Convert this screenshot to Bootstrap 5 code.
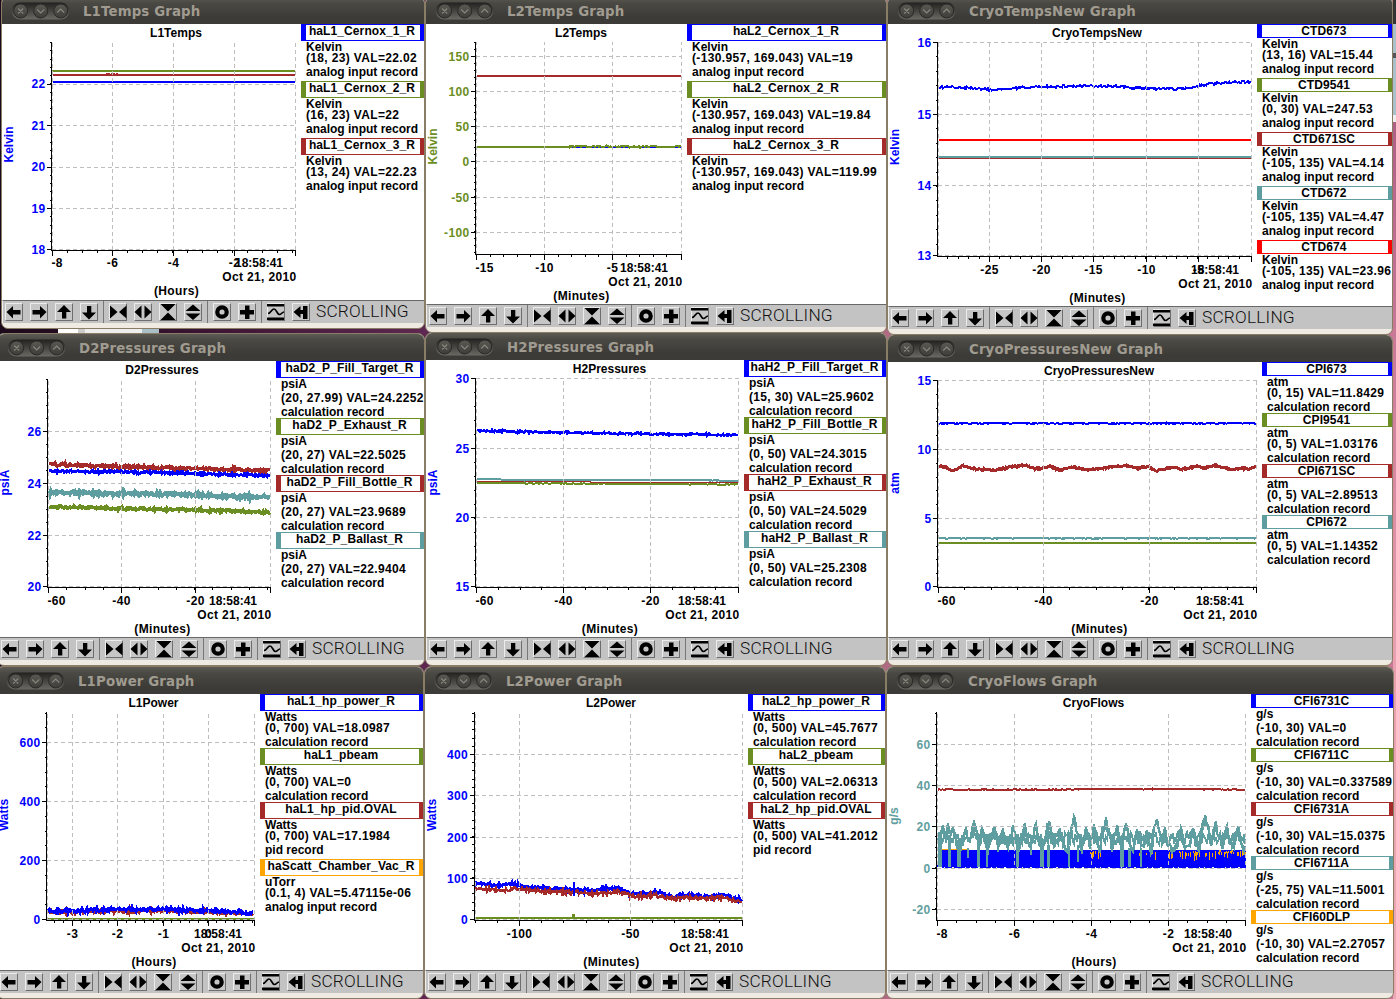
<!DOCTYPE html>
<html lang="en">
<head>
<meta charset="utf-8">
<title>StripTool Graphs</title>
<link href="https://cdn.jsdelivr.net/npm/bootstrap@5.3.0/dist/css/bootstrap.min.css" rel="stylesheet">
<style>
body{width:1396px;height:999px;margin:0;font:bold 12px/12px "Liberation Sans",Arial,sans-serif;color:#000;
 background:linear-gradient(90deg,#1c0a1c 0,#3a1434 200px,#5f2852 430px,#8a4468 700px,#b06a84 885px,#c97796 1396px)}
.win{border:1px solid #8a7d66;border-radius:7px;background:#f0ebe2;overflow:hidden}
.bar{height:27px;flex:none;background:linear-gradient(#5d5b54 0,#4a4943 6px,#3c3b37 20px,#3c3b37);
 font:bold 13.33px/27px "DejaVu Sans",sans-serif;letter-spacing:.13px;color:#a09b90}
.bar svg{margin-left:9px;margin-right:13px;flex:none}
.bar span{margin-top:1px}
.pane{background:#fff;overflow:hidden}
.plot text{font:bold 12px "Liberation Sans",Arial,sans-serif}
.n{letter-spacing:.34px}
.leg{overflow:hidden;white-space:pre}
.tag{box-sizing:border-box;border:1px solid;border-left-width:5px;border-right-width:4px;letter-spacing:.1px}
.tag span{color:#000;display:block;text-align:center;margin:0 -3px 0 -5px}
.ln{padding-left:5px;height:11px}
.ln.d{height:14px}
.tools{height:23px;flex:none;background:#c3c3c3;border-top:1px solid #686868;border-left:1px solid #eee;padding:2px 0 0 2px;margin-bottom:5px}
.tools .k{width:18px;height:18px;margin-right:7px;border:1px solid;border-color:#ececec #6e6e6e #6e6e6e #ececec;flex:none;background:#c6c6c6}
.tools .k svg{display:block;margin:-1px}
.tools i{width:1px;height:22px;background:#777;margin:-2px 5px 0 -2px;flex:none}
.tools b{font:300 17.3px/16px Roboto,"Liberation Sans",sans-serif;letter-spacing:.2px;color:#111;margin-left:-1px}
.edge{left:1393px;top:0;width:3px;height:999px;background:linear-gradient(#333 0 24px,#a9c0c9 24px 53px,#555 53px 58px,#a9c0c9 58px 115px,#eee 115px 122px,#b05f85 122px,#e9a0b0 660px,#eba8b4)}
.peek{left:58px;top:328px;width:101px;height:7px;background:linear-gradient(90deg,#fff 0 20px,#ccc 20px 27px,#eee 27px 84px,#a9c0c9 84px)}
</style>
</head>
<body class="position-relative overflow-hidden">
<svg width="0" height="0" class="position-absolute">
 <symbol id="i0" viewBox="0 0 18 18"><path d="M1.5 9L8 3V7H15.500V11.500H8V15.500Z"/></symbol>
 <symbol id="i1" viewBox="0 0 18 18"><path d="M16.500 9L10 3V7H2.500V11.500H10V15.500Z"/></symbol>
 <symbol id="i2" viewBox="0 0 18 18"><path d="M9 2L16 9H11.300V15.500H7V9H2Z"/></symbol>
 <symbol id="i3" viewBox="0 0 18 18"><path d="M9 16.500L16 9.500H11.300V3H7V9.500H2Z"/></symbol>
 <symbol id="i4" viewBox="0 0 18 18"><path d="M1 2.5L8.5 9L1 15.5ZM17.5 2.5L10 9L17.5 15.5Z"/></symbol>
 <symbol id="i5" viewBox="0 0 18 18"><path d="M.5 9L7.5 2.500V15.500ZM17.500 9L10.5 2.500V15.500Z"/></symbol>
 <symbol id="i6" viewBox="0 0 18 18"><path d="M1.5 1H16.500L9 8.500ZM9 9.500L16.500 17H1.500Z"/></symbol>
 <symbol id="i7" viewBox="0 0 18 18"><path d="M9 1.5L16.500 8H1.500ZM1.500 10.5H16.500L9 17Z"/></symbol>
 <symbol id="i8" viewBox="0 0 18 18"><circle cx="9" cy="9" r="4.7" fill="none" stroke="#000" stroke-width="4.200"/></symbol>
 <symbol id="i9" viewBox="0 0 18 18"><path d="M7 2.500H11.500V7H16V11.500H11.500V16H7V11.500H2V7H7Z"/></symbol>
 <symbol id="i10" viewBox="0 0 18 18"><path d="M0 1H17V3.5H0ZM0 14.5H17V17H0Z"/><path d="M1 10.500C4 10.500 4.500 6 7 6S10 11.500 12.500 11.500C14.500 11.500 15 9 17 9" fill="none" stroke="#000" stroke-width="1.700"/></symbol>
 <symbol id="i11" viewBox="0 0 18 18"><path d="M1.500 9L8.500 3V7H11V3H15.500V16H11V11H8.500V15Z"/></symbol>
 <symbol id="wm" viewBox="0 0 59 18">
  <defs><linearGradient id="pg" x1="0" y1="0" x2="0" y2="1"><stop offset="0" stop-color="#22211f"/><stop offset="1" stop-color="#6b6963"/></linearGradient>
  <linearGradient id="cg" x1="0" y1="0" x2="0" y2="1"><stop offset="0" stop-color="#5a5953"/><stop offset="1" stop-color="#3e3d39"/></linearGradient></defs>
  <rect x=".5" y=".5" width="58" height="17" rx="8.500" fill="url(#pg)"/>
  <g fill="url(#cg)" stroke="#2a2926"><circle cx="9.700" cy="9" r="7"/><circle cx="29.700" cy="9" r="7"/><circle cx="49.700" cy="9" r="7"/></g>
  <path d="M7.200 6.500l5 5m0-5l-5 5M26.200 7.500l3.500 3.500L33.200 7.500M46.200 10.500l3.500-3.500L53.200 10.500" fill="none" stroke="#8a877f" stroke-width="1.100"/>
 </symbol>
</svg>
<div class="edge position-absolute"></div>
<div class="peek position-absolute"></div>
<main id="desk"></main>

<script>
const B='#0000ff',O='#6b8e23',R='#a52a2a',T='#5f9ea0',G='#ffa500',RED='#ff0000';
const HR='(Hours)',MN='(Minutes)',AI='analog input record',CR='calculation record';
// l/r: content edges; t: content top; k: toolbar top; x/y: axes; ys/xs: [position,label] of major ticks; ym/xm: subdivisions
// s: series as [colour, stroke, noise, [x,y,...]]; g: legend entries
const wins=[
{n:'L1Temps',l:2,r:424,t:24,k:300,lx:301,x:[52,295.5],y:[42,250],c:B,u:'Kelvin',uy:144.5,cx:176,
 ys:[[84,22],[125.5,21],[167,20],[208.5,19],[249.5,18]],ym:5,xs:[[52.5,-8],[112.5,-6],[173.5,-4],[234.5,-2],[295.5]],xm:4,tm:[235,'18:58:41'],un:HR,
 s:[[O,2,0,[52,71,295,71]],[R,2,0,[53,75,295,75]],[R,1,1,[106,73.8,118,73.8]],[B,2,0,[53,82,295,82]]],
 g:[['haL1_Cernox_1_R',B,'Kelvin','(18, 23) VAL=22.02',AI],['haL1_Cernox_2_R',O,'Kelvin','(16, 23) VAL=22',AI],['haL1_Cernox_3_R',R,'Kelvin','(13, 24) VAL=22.23',AI]]},
{n:'L2Temps',l:426,r:886,t:24,k:304,lx:687,x:[476,681.5],y:[42,254.5],c:O,u:'Kelvin',uy:146.5,cx:581,
 ys:[[56.5,150],[91.5,100],[126.5,50],[161.5,0],[197.5,-50],[232.5,-100]],ym:5,xs:[[476.5,-15],[544.5,-10],[612.5,-5],[681.5]],xm:5,tm:[620,'18:58:41'],un:MN,
 s:[[R,2,0,[477,76,681,76]],[B,2,0,[570,147,681,147]],[O,2,0,[477,147,572,147]],[O,1,0,[572,146.5,681,146.5]],[O,2,1.2,[568,146.5,612,146.5]],[O,2,1.2,[615,146.5,660,146.5]],[O,2,0,[658,147,675,147]],[O,2,1,[675,146.5,681,146.5]]],
 g:[['haL2_Cernox_1_R',B,'Kelvin','(-130.957, 169.043) VAL=19',AI],['haL2_Cernox_2_R',O,'Kelvin','(-130.957, 169.043) VAL=19.84',AI],['haL2_Cernox_3_R',R,'Kelvin','(-130.957, 169.043) VAL=119.99',AI]]},
{n:'CryoTempsNew',l:888,r:1392,t:24,k:306,lx:1257,x:[938,1251.5],y:[42,256.5],c:B,u:'Kelvin',uy:147,cx:1097,
 ys:[[42.5,16],[114.5,15],[185.5,14],[255.500,13]],ym:5,xs:[[989.5,-25],[1041.5,-20],[1093.5,-15],[1146.5,-10],[1198.5,-5],[1251.5]],xm:5,tm:[1191,'18:58:41'],un:MN,
 s:[[B,2,1.5,[938,87.3,968,87.3,992,90,1013,88.300,1042,86.700,1082,86,1115,86,1135,88,1182,89,1208,84,1251,81.500]],[RED,2,0,[939,140,1251,140]],[R,2,0,[939,158,1251,158]],[T,2,0,[939,157,1251,157]]],
 g:[['CTD673',B,'Kelvin','(13, 16) VAL=15.44',AI],['CTD9541',O,'Kelvin','(0, 30) VAL=247.53',AI],['CTD671SC',R,'Kelvin','(-105, 135) VAL=4.14',AI],['CTD672',T,'Kelvin','(-105, 135) VAL=4.47',AI],['CTD674',RED,'Kelvin','(-105, 135) VAL=23.96',AI]]},
{n:'D2Pressures',l:-2,r:424,t:361,k:637,lx:276,x:[48,270.5],y:[379,587.5],c:B,u:'psiA',uy:482.5,cx:162,
 ys:[[431.5,26],[483.5,24],[535.5,22],[586.5,20]],ym:4,xs:[[48.5,-60],[121.5,-40],[195.5,-20],[270.5]],xm:4,tm:[209,'18:58:41'],un:MN,
 s:[[R,3.5,1.900,[49,464.5,121,466.5,270,470.500]],[B,3,1.600,[49,471,160,472.500,270,475.500]],[T,4,2.300,[49,492.500,160,494,270,497.5]],[O,3.500,1.900,[49,507,160,509,270,512.300]]],
 g:[['haD2_P_Fill_Target_R',B,'psiA','(20, 27.99) VAL=24.2252',CR],['haD2_P_Exhaust_R',O,'psiA','(20, 27) VAL=22.5025',CR],['haD2_P_Fill_Bottle_R',R,'psiA','(20, 27) VAL=23.9689',CR],['haD2_P_Ballast_R',T,'psiA','(20, 27) VAL=22.9404',CR]]},
{n:'H2Pressures',l:426,r:886,t:360,k:637,lx:744,x:[476,738.5],y:[378,587.5],c:B,u:'psiA',uy:482.5,cx:609.5,
 ys:[[378.5,30],[448.5,25],[517.5,20],[586.5,15]],ym:5,xs:[[476.5,-60],[563.5,-40],[650.5,-20],[738.5]],xm:4,tm:[678,'18:58:41'],un:MN,
 s:[[B,2.500,1.400,[477,430.500,530,432,650,434,738,435]],[O,2,.6,[477,483,738,484.500]],[R,1,0,[477,481.500,590,481.5,591,482.500,738,482.500]],[T,2,.6,[477,479,500,479,502,480,700,480,738,481]]],
 g:[['haH2_P_Fill_Target_R',B,'psiA','(15, 30) VAL=25.9602',CR],['haH2_P_Fill_Bottle_R',O,'psiA','(0, 50) VAL=24.3015',CR],['haH2_P_Exhaust_R',R,'psiA','(0, 50) VAL=24.5029',CR],['haH2_P_Ballast_R',T,'psiA','(0, 50) VAL=25.2308',CR]]},
{n:'CryoPressuresNew',l:888,r:1392,t:362,k:637,lx:1262,x:[938,1256.5],y:[380,587.5],c:B,u:'atm',uy:483,cx:1099,
 ys:[[380.5,15],[449.5,10],[518.5,5],[586.5,0]],ym:5,xs:[[938.5,-60],[1043.5,-40],[1149.5,-20],[1256.5]],xm:4,tm:[1196,'18:58:41'],un:MN,
 s:[[B,2,.9,[939,423.300,1256,423.300]],[R,3,1.200,[939,465.5,954,471,963,465.500,975,469,995,470,1025,465,1035,469,1050,466.500,1060,470,1073,467,1088,470,1125,465.300,1138,468,1148,466,1155,471,1172,467,1182,469.300,1197,466,1205,468,1215,465.500,1232,469.500,1242,468,1249,469.800,1256,466]],[T,2,.6,[939,538.300,1256,538.300]],[O,2,0,[939,543,1256,543]]],
 g:[['CPI673',B,'atm','(0, 15) VAL=11.8429',CR],['CPI9541',O,'atm','(0, 5) VAL=1.03176',CR],['CPI671SC',R,'atm','(0, 5) VAL=2.89513',CR],['CPI672',T,'atm','(0, 5) VAL=1.14352',CR]]},
{n:'L1Power',l:-3,r:423,t:694,k:970,lx:260,x:[47,254.5],y:[712,920.5],c:B,u:'Watts',uy:815,cx:153.5,
 ys:[[742.5,600],[801.5,400],[860.5,200],[919.5,0]],ym:4,xs:[[72.5,-3],[117.5,-2],[163.5,-1],[208.5,0],[254.5]],xm:5,tm:[194,'18:58:41'],un:HR,
 s:[[R,3,2.400,[48,912,80,911.500,160,911,205,912,253,913.500]],[B,3,2.600,[47,911,80,910.500,120,909.500,167,909.500,207,911,253,912.500]],[O,2,0,[47,919,254,919]]],
 g:[['haL1_hp_power_R',B,'Watts','(0, 700) VAL=18.0987',CR],['haL1_pbeam',O,'Watts','(0, 700) VAL=0',CR],['haL1_hp_pid.OVAL',R,'Watts','(0, 700) VAL=17.1984','pid record'],['haScatt_Chamber_Vac_R',G,'uTorr','(0.1, 4) VAL=5.47115e-06',AI]]},
{n:'L2Power',l:425,r:885,t:694,k:970,lx:748,x:[474.500,742.5],y:[712,920.5],c:B,u:'Watts',uy:815,cx:611,
 ys:[[754.5,400],[795.5,300],[837.5,200],[878.5,100],[919.5,0]],ym:5,xs:[[519.5,-100],[630.5,-50],[742.5]],xm:5,tm:[681,'18:58:41'],un:MN,
 s:[[B,3,2.400,[475,883.5,498,885.500,512,884,525,887,558,889,585,890.500,615,888.500,632,893.500,655,892,672,896.500,692,895,702,897,725,895,742,900.500]],[R,2.500,2.600,[475,888,500,890,520,889,540,891,580,892.500,600,894,618,891.500,632,896.500,655,895,672,898.500,700,898,725,898,742,902.500]],[B,2,0,[573.500,882,573.500,896]],[O,2,0,[475,918,742,918]],[O,3,0,[573.500,914,573.500,918]]],
 g:[['haL2_hp_power_R',B,'Watts','(0, 500) VAL=45.7677',CR],['haL2_pbeam',O,'Watts','(0, 500) VAL=2.06313',CR],['haL2_hp_pid.OVAL',R,'Watts','(0, 500) VAL=41.2012','pid record']]},
{n:'CryoFlows',l:887,r:1393,t:694,k:970,lx:1251,x:[937,1245.5],y:[712,920.5],c:T,u:'g/s',uy:816,cx:1093.5,
 ys:[[744.5,60],[785.5,40],[826.5,20],[868.5,0],[909.5,-20]],ym:4,xs:[[937.5,-8],[1014.5,-6],[1091.5,-4],[1168.5,-2],[1245.5]],xm:4,tm:[1184,'18:58:40'],un:HR,flow:1,
 s:[[R,2,.7,[938,789.700,1060,789.700,1090,789,1190,789,1245,789.700]]],
 g:[['CFI6731C',B,'g/s','(-10, 30) VAL=0',CR],['CFI6711C',O,'g/s','(-10, 30) VAL=0.337589',CR],['CFI6731A',R,'g/s','(-10, 30) VAL=15.0375',CR],['CFI6711A',T,'g/s','(-25, 75) VAL=11.5001',CR],['CFI60DLP',G,'g/s','(-10, 30) VAL=2.27057',CR]]}
];
let seed=7;const rnd=()=>(seed=(seed*16807)%2147483647)/2147483647;
const at=(p,x)=>{for(let i=0;i<p.length-2;i+=2)if(x<=p[i+2])return p[i+1]+(p[i+3]-p[i+1])*(x-p[i])/((p[i+2]-p[i])||1);return p[p.length-1]};
function line([c,w,a,p]){
 let d='M';
 if(!a)d+=p.join(' ');
 else for(let x=p[0];x<=p[p.length-2];x++)d+=x+' '+(at(p,x)+(rnd()+rnd()-1)*a).toFixed(1)+' ';
 return `<path d="${d}" fill="none" stroke="${c}" stroke-width="${w}"/>`;
}
function flows(){
 let s=`<path d="M941 849.500H968" stroke="${G}"/><rect x="942" y="850" width="304" height="17.500" fill="${B}"/><path d="M938 867V861" stroke="${B}" stroke-width="2"/>`;
 let o='';
 for(let x=1086;x<1246;x++){
  const p=x<1102?.5:x>1122&&x<1160?.22:x>1215?.7:x>1168?.5:0;
  if(rnd()<p){const h=x>1215?2+rnd()*5:2+rnd()*7,y=x>1215?850+rnd()*3:851+rnd()*3;o+=`M${x+.5} ${y|0}v${h|0}`}
 }
 s+=`<path d="${o}" stroke="${G}"/>`;
 const pk=[[943,825],[948,823],[953,827],[966,827],[974,820],[982,828],[994,826],[1003,828],[1013,825],[1025,823],[1036,824],[1049,821],[1060,828],[1074,817],[1086,827],[1094,824],[1106,817],[1117,825],[1126,825],[1137,829],[1147,830],[1157,819],[1165,827],[1181,828],[1193,828],[1205,815],[1216,821],[1227,826],[1238,826]];
 let d='M',e='M';
 for(let x=938;x<1246;x++){
  let n=1e9,py=828;pk.forEach(q=>{const m=Math.abs(q[0]-x);if(m<n){n=m;py=q[1]}});
  const y=n<1?py:Math.min(849,py+4+n*3.4)+(rnd()-.5)*12;
  d+=x+' '+Math.round(y)+' ';
  e+=x+' '+Math.round(838+(rnd()-.5)*13)+' ';
 }
 s+=`<path d="${e}" fill="none" stroke="${T}" stroke-width="2"/><path d="${d}" fill="none" stroke="${T}" stroke-width="2.500"/>`;
 s+=`<path d="M940 836V867M959 840V867M1042 840V867M1122 840V867" stroke="${T}" stroke-width="4"/>
 <path d="M949.500 840V867M978 840V867M1017.500 840V867M1048.500 845V867M1129 848V867" stroke="${T}" stroke-width="3"/>
 <path d="M968 848V858M987 840V867M998 846V852M1031 846V855M1069 846V867M1078 845V862M1082 845V854M1141 848V867" stroke="${T}" stroke-width="2"/>`;
 s+=`<path d="M944 867.500H1245" stroke="#fff" stroke-dasharray="1 7 2 11 1 4"/>`;
 return s;
}
function chart(w){
 const [x0,x1]=w.x,[y0,y1]=w.y,W=w.lx-w.l,H=w.k-w.t;
 let s='',g='',t='',tx='';
 w.s.forEach(q=>s+=line(q));if(w.flow)s+=flows();
 w.ys.forEach(([y])=>g+=`M${x0} ${y}H${x1}`);w.xs.forEach(([x])=>g+=`M${x} ${y1}V${y0}`);
 g+=`M${w.x[0]+.5} ${y1}V${y0}`;
 w.ys.forEach(([y,l])=>{t+=`M${x0-5} ${y}H${x0}`;tx+=`<text class="n" x="${x0-6.500}" y="${y+4}" text-anchor="end" fill="${w.c}">${l}</text>`});
 const dy=(w.ys[1][0]-w.ys[0][0])/w.ym,ya=w.ys[0][0];
 for(let y=ya-dy*Math.floor((ya-y0)/dy+.05);y<=y1-2;y+=dy)t+=`M${x0-2.500} ${Math.floor(y)+.5}H${x0}`;
 const dx=(w.xs[1][0]-w.xs[0][0])/w.xm,xa=w.xs[0][0];
 for(let x=xa-dx*Math.floor((xa-x0)/dx);x<=x1-2;x+=dx)t+=`M${Math.floor(x)+.5} ${y1}v2.500`;
 const b=Math.round(y1+17);
 w.xs.forEach(([x,l])=>{t+=`M${x} ${y1}v5.500`;if(l!==undefined){const first=x-x0<2;
  tx+=`<text class="n" x="${first?x0-.5:x}" y="${b}" text-anchor="${first?'start':'middle'}">${l}</text>`}});
 tx+=`<text x="${w.tm[0]}" y="${b}">${w.tm[1]}</text><text class="n" x="${x1+1}" y="${b+14}" text-anchor="end">Oct 21, 2010</text>
 <text x="${w.cx+.5}" y="${b+28}" text-anchor="middle" class="n">${w.un}</text><text x="${w.cx}" y="${w.t+13}" text-anchor="middle">${w.n}</text>
 <text transform="translate(${w.l+11} ${w.uy}) rotate(-90)" text-anchor="middle" fill="${w.c}">${w.u}</text>`;
 return `<svg class="plot d-block flex-shrink-0" width="${W}" height="${H}" viewBox="${w.l} ${w.t} ${W} ${H}"><g shape-rendering="crispEdges">${s}
 <path d="${g}" stroke="#bebebe" stroke-dasharray="4 3" fill="none"/><path d="${t}" stroke="#000"/><path d="M${x0-.5} ${y0}V${y1}H${x1}" fill="none" stroke="#000"/></g>${tx}</svg>`;
}
// rows whose text reaches below the baseline are 3px taller
const desc=s=>/[gjpqy,()_]/.test(s)?' d':'';
function legend(w){
 const tall=w.g.some(q=>/_/.test(q[0]));
 return '<div class="leg flex-grow-1">'+w.g.map(q=>`<div class="tag" style="height:${tall?17:14}px;color:${q[1]}"><span>${q[0]}</span></div>
<div class="ln${desc(q[2])}">${q[2]}</div><div class="ln d n">${q[3]}</div><div class="ln${desc(q[4])}" style="margin-bottom:1px">${q[4]}</div>`).join('').replace(/\n/g,'')+'</div>';
}
const key=i=>`<div class="k"><svg width="18" height="18"><use href="#i${i}"/></svg></div>`;
const tools='<div class="tools d-flex">'+[0,1,2,3].map(key).join('')+'<i></i>'+[4,5,6,7].map(key).join('')+'<i></i>'+[8,9].map(key).join('')+'<i></i>'+[10,11].map(key).join('')+'<b>SCROLLING</b></div>';
document.getElementById('desk').innerHTML=wins.map(w=>`<section class="win position-absolute d-flex flex-column" style="left:${w.l-1}px;top:${w.t-28}px;width:${w.r-w.l+2}px;height:${w.k-w.t+57}px">
<div class="bar d-flex align-items-center"><svg width="59" height="18"><use href="#wm"/></svg><span>${w.n} Graph</span></div>
<div class="pane d-flex flex-grow-1">${chart(w)}${legend(w)}</div>${tools}</section>`).join('');
</script>
<script src="https://cdn.jsdelivr.net/npm/bootstrap@5.3.0/dist/js/bootstrap.bundle.min.js"></script>
</body>
</html>
